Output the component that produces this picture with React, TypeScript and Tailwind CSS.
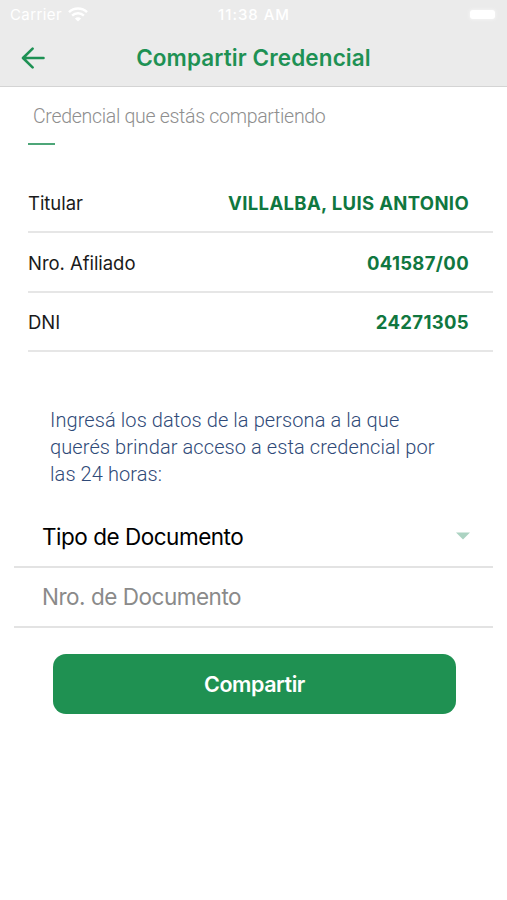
import { useState } from "react";

interface CredentialField {
  label: string;
  value: string;
}

const FIELDS: CredentialField[] = [
  { label: "Titular", value: "VILLALBA, LUIS ANTONIO" },
  { label: "Nro. Afiliado", value: "041587/00" },
  { label: "DNI", value: "24271305" },
];

function WifiIcon() {
  return (
    <svg width="20" height="15" viewBox="0 0 20 15" fill="none" stroke="#fff">
      <path d="M1 5.2C6 .4 14 .4 19 5.2" strokeWidth="2.5" />
      <path d="M4.1 8.6c3.3-3.2 8.5-3.2 11.8 0" strokeWidth="2.4" />
      <path d="M10 14.6 6.9 11.4c1.7-1.6 4.5-1.6 6.2 0z" fill="#fff" stroke="none" />
    </svg>
  );
}

function StatusBar() {
  return (
    <div className="grid h-[29px] grid-cols-3 items-center pl-[10px] pr-[12px] text-[15px] leading-none text-white">
      <div className="flex items-center gap-[6px]">
        <span className="tracking-[0.4px]">Carrier</span>
        <WifiIcon />
      </div>
      <span className="pl-[3px] text-center font-medium tracking-[0.95px]">11:38 AM</span>
      <div className="flex justify-end">
        <div className="h-[9px] w-[25px] rounded-[3px] bg-white shadow-[0_0_3px_1px_#f3f3f3]" />
      </div>
    </div>
  );
}

function Header() {
  return (
    <header className="h-[87px] border-b border-[#d4d4d4] bg-[#ebebeb]">
      <StatusBar />
      <div className="grid h-[57px] grid-cols-[56px_1fr_56px] items-center">
        <button aria-label="Volver" className="pl-[21px]">
          <svg width="24" height="22" viewBox="0 0 24 22" fill="none" stroke="#1e9154" strokeWidth="2.6" strokeLinecap="round" strokeLinejoin="round">
            <path d="M22.5 11H2.2M11.6 1.6 2 11l9.6 9.4" />
          </svg>
        </button>
        <h1 className="text-center text-[22.5px] font-semibold tracking-[0.1px] text-[#1e9154]">Compartir Credencial</h1>
      </div>
    </header>
  );
}

export default function App() {
  const [documento, setDocumento] = useState("");

  return (
    <div className="h-[900px] w-[507px] overflow-hidden bg-white font-['Inter',sans-serif]">
      <Header />

      <main className="px-[14px]">
        <section className="pl-[14px]">
          <h2 className="pl-[5px] pt-[15px] font-['Roboto',sans-serif] text-[19.5px] font-light leading-[30px] tracking-[-0.3px] text-[#8e8e8e]">
            Credencial que estás compartiendo
          </h2>
          <div className="mt-[11px] h-[2px] w-[27px] bg-[#4da678]" />

          <dl className="mt-[29px]">
            {FIELDS.map((field) => (
              <div
                key={field.label}
                className="flex h-[59.3px] items-center justify-between border-b-2 border-[#e6e6e6] pr-[24px] pt-[3px] text-[18.5px]"
              >
                <dt className="tracking-[-0.05px] text-[#1a1a1a]">{field.label}</dt>
                <dd className="font-bold tracking-[0.34px] text-[#10773f]">{field.value}</dd>
              </div>
            ))}
          </dl>
        </section>

        <p className="ml-[36px] mt-[55px] w-[400px] font-['Roboto',sans-serif] text-[20px] font-light leading-[27px] tracking-[0.09px] text-[#2f4a78]">
          Ingresá los datos de la persona a la que querés brindar acceso a esta credencial por las 24 horas:
        </p>

        <form onSubmit={(e) => e.preventDefault()}>
          <button
            type="button"
            className="mt-[18px] flex h-[62px] w-full items-center justify-between border-b-2 border-[#e3e3e3] pl-[28px] pr-[23px] pt-px text-[22.5px] tracking-[-0.48px] text-black"
          >
            Tipo de Documento
            <svg width="14" height="8" viewBox="0 0 14 8" fill="#acd3c2">
              <path d="M0 .5h14L7 7.5z" />
            </svg>
          </button>
          <input
            value={documento}
            onChange={(e) => setDocumento(e.target.value)}
            placeholder="Nro. de Documento"
            className="block h-[60px] w-full border-b-2 border-[#e3e3e3] pl-[28px] text-[22.5px] tracking-[-0.48px] outline-none placeholder:text-[#8a8a8a]"
          />
          <button
            type="submit"
            className="ml-[39px] mt-[26px] h-[60px] w-[403px] rounded-[13px] bg-[#1f9152] pt-px text-[21.5px] font-semibold tracking-[-0.45px] text-white"
          >
            Compartir
          </button>
        </form>
      </main>
    </div>
  );
}
